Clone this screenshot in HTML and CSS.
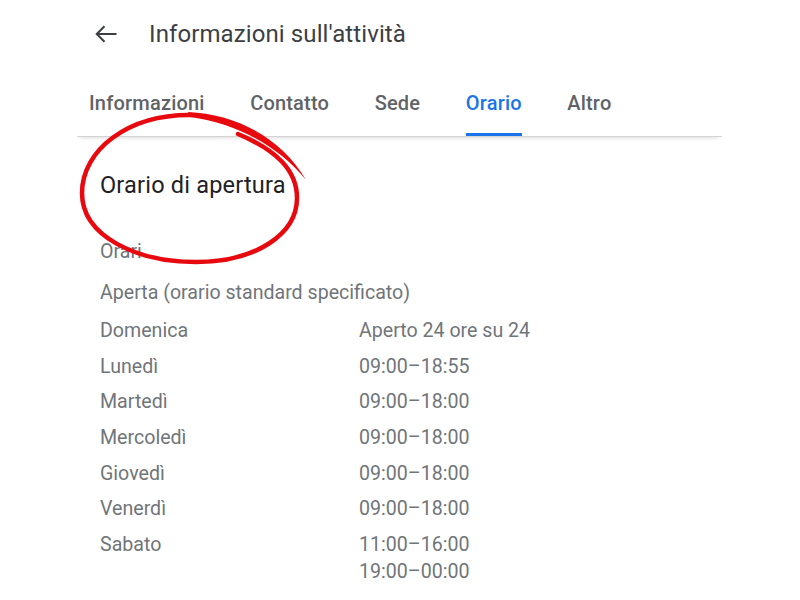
FILE: index.html
```html
<!DOCTYPE html>
<html lang="it">
<head>
<meta charset="utf-8">
<title>Informazioni sull'attività</title>
<link rel="stylesheet" href="styles.css">
</head>
<body>
<div class="app">
  <header class="header">
    <svg class="back" width="22" height="18" viewBox="0 0 22 18" aria-hidden="true">
      <path d="M21.5 9H2 M9.5 1.2 L1.7 9 L9.5 16.8" fill="none" stroke="#3c4043" stroke-width="2"/>
    </svg>
    <h1 class="title">Informazioni sull'attività</h1>
  </header>
  <div class="panel">
    <nav class="tabs">
      <span class="tab">Informazioni</span>
      <span class="tab">Contatto</span>
      <span class="tab">Sede</span>
      <span class="tab active">Orario</span>
      <span class="tab">Altro</span>
    </nav>
    <section class="content">
      <h2 class="heading">Orario di apertura</h2>
      <div class="label">Orari</div>
      <div class="status">Aperta (orario standard specificato)</div>
      <div class="rows">
        <div class="row"><span class="day">Domenica</span><span class="hours">Aperto 24 ore su 24</span></div>
        <div class="row"><span class="day">Lunedì</span><span class="hours">09:00–18:55</span></div>
        <div class="row"><span class="day">Martedì</span><span class="hours">09:00–18:00</span></div>
        <div class="row"><span class="day">Mercoledì</span><span class="hours">09:00–18:00</span></div>
        <div class="row"><span class="day">Giovedì</span><span class="hours">09:00–18:00</span></div>
        <div class="row"><span class="day">Venerdì</span><span class="hours">09:00–18:00</span></div>
        <div class="row"><span class="day">Sabato</span><span class="hours">11:00–16:00<br>19:00–00:00</span></div>
      </div>
    </section>
  </div>
  <svg class="scribble" width="800" height="600" viewBox="0 0 800 600" aria-hidden="true">
    <path d="M192 115 C 128 114, 82 150, 82 193 C 82 236, 136 262, 196 262 C 256 262, 297 234, 297 198 C 297 170, 276 150, 238 134" fill="none" stroke="#e8090f" stroke-width="4.5" stroke-linecap="round"/>
    <path d="M188 112 C 236 114, 282 138, 306 180 C 280 148, 240 124, 190 117 Z" fill="#e8090f"/>
  </svg>
</div>
</body>
</html>
```
FILE: styles.css
```css
* { box-sizing: border-box; }
html, body { margin: 0; padding: 0; background: #ffffff; }
body { font-family: Roboto, "Noto Sans", Arial, sans-serif; }

.app {
  position: relative;
  width: 800px;
  height: 600px;
  overflow: hidden;
  background: #ffffff;
}

.header {
  display: flex;
  align-items: center;
  height: 68px;
  padding-left: 95px;
}
.back { display: block; margin-right: 32px; }
.title {
  margin: 0;
  font-size: 24px;
  font-weight: 400;
  color: #3c4043;
  line-height: 28px;
  letter-spacing: 0.1px;
}

.panel {
  margin-left: 77px;
  width: 645px;
}

.tabs {
  display: flex;
  gap: 45.5px;
  padding-left: 12px;
  padding-top: 2px;
  border-bottom: 1px solid #d4d4d4;
  box-shadow: 0 4px 4px -3px rgba(0, 0, 0, 0.14);
}
.tab {
  padding-top: 22px;
  padding-bottom: 19px;
  line-height: 22px;
  font-size: 20px;
  font-weight: 500;
  letter-spacing: 0.2px;
  color: #5f6368;
  border-bottom: 3px solid transparent;
}
.tab.active {
  color: #1a73e8;
  border-bottom-color: #1a73e8;
  border-radius: 2px 2px 0 0;
}

.content {
  padding-left: 23px;
  color: #70757a;
  font-size: 19.6px;
}
.heading {
  margin: 36px 0 0;
  font-size: 23.5px;
  font-weight: 400;
  letter-spacing: 0.2px;
  line-height: 24px;
  color: #202124;
}
.label {
  margin-top: 43px;
  line-height: 24px;
}
.status {
  margin-top: 15px;
  line-height: 27px;
}
.rows {
  display: flex;
  flex-direction: column;
  gap: 8.7px;
  margin-top: 11px;
}
.row {
  display: flex;
  line-height: 27px;
}
.day { width: 259px; flex: none; }

.scribble {
  position: absolute;
  left: 0;
  top: 0;
  pointer-events: none;
}
```
